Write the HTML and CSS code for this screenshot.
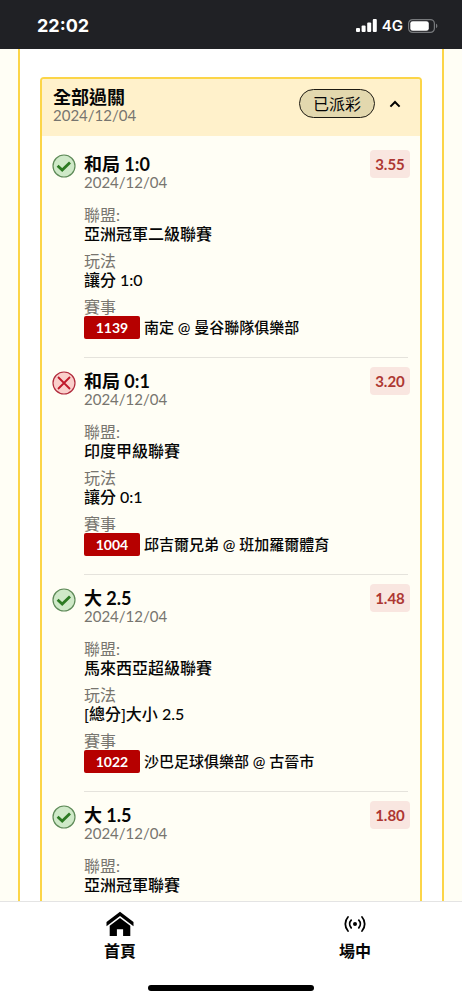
FILE: index.html
```html
<!DOCTYPE html>
<html lang="zh-Hant">
<head>
<meta charset="utf-8">
<meta name="viewport" content="width=device-width, initial-scale=1">
<title>全部過關</title>
<link rel="stylesheet" href="styles.css">
</head>
<body>
<svg class="defs" width="0" height="0" aria-hidden="true">
  <symbol id="win" viewBox="0 0 24 24">
    <circle cx="12" cy="12" r="11" fill="#cfe9c8" stroke="#5e8a58" stroke-width="1.2"/>
    <path d="M5.600 11.800l4.600 4.200 7.800-7.600" fill="none" stroke="#2c7a22" stroke-width="2.800"/>
  </symbol>
  <symbol id="lose" viewBox="0 0 24 24">
    <circle cx="12" cy="12" r="11" fill="#facfcb" stroke="#b02a3c" stroke-width="1.2"/>
    <path d="M6 6l12 12M18 6L6 18" fill="none" stroke="#c0182a" stroke-width="1.8"/>
  </symbol>
</svg>

<header class="status">
  <time class="clock">22:02</time>
  <div class="signals">
    <svg width="21" height="14" viewBox="0 0 21 14" fill="#fff" aria-hidden="true">
      <rect x="0" y="9" width="4" height="4" rx="1"/><rect x="5.6" y="6.5" width="4" height="6.500" rx="1"/><rect x="11.2" y="3.5" width="4" height="9.500" rx="1"/><rect x="16.8" y="0" width="4" height="13" rx="1"/>
    </svg>
    <span>4G</span>
    <svg width="30" height="14" viewBox="0 0 30 14" aria-hidden="true">
      <rect x=".6" y=".6" width="25.8" height="12.8" rx="4" fill="none" stroke="#77797c" stroke-width="1.2"/>
      <rect x="2.3" y="2.2" width="18.5" height="9.6" rx="2.4" fill="#fff"/>
      <path d="M28 4.8c1.8.6 1.8 3.8 0 4.4z" fill="#77797c"/>
    </svg>
  </div>
</header>

<main class="page">
  <div class="panel">
    <section class="card">
      <div class="card-head">
        <div>
          <h1 class="title">全部過關</h1>
          <p class="date">2024/12/04</p>
        </div>
        <div class="card-tools">
          <span class="pill">已派彩</span>
          <button class="toggle" type="button" aria-label="收合">
            <svg width="12" height="8" viewBox="0 0 12 8"><path d="M1.4 6.6L6 2l4.600 4.600" fill="none" stroke="#000" stroke-width="2"/></svg>
          </button>
        </div>
      </div>
      <div class="bets">
        <article class="bet">
          <svg class="mark" role="img" aria-label="贏"><use href="#win"/></svg>
          <div class="info">
            <h2 class="title">和局 1:0</h2>
            <p class="date">2024/12/04</p>
            <dl class="facts">
              <div><dt>聯盟:</dt><dd>亞洲冠軍二級聯賽</dd></div>
              <div><dt>玩法</dt><dd>讓分 1:0</dd></div>
              <div><dt>賽事</dt><dd class="match"><span class="code">1139</span>南定 @ 曼谷聯隊俱樂部</dd></div>
            </dl>
          </div>
          <span class="odds">3.55</span>
        </article>
        <hr class="rule">
        <article class="bet">
          <svg class="mark" role="img" aria-label="輸"><use href="#lose"/></svg>
          <div class="info">
            <h2 class="title">和局 0:1</h2>
            <p class="date">2024/12/04</p>
            <dl class="facts">
              <div><dt>聯盟:</dt><dd>印度甲級聯賽</dd></div>
              <div><dt>玩法</dt><dd>讓分 0:1</dd></div>
              <div><dt>賽事</dt><dd class="match"><span class="code">1004</span>邱吉爾兄弟 @ 班加羅爾體育</dd></div>
            </dl>
          </div>
          <span class="odds">3.20</span>
        </article>
        <hr class="rule">
        <article class="bet">
          <svg class="mark" role="img" aria-label="贏"><use href="#win"/></svg>
          <div class="info">
            <h2 class="title">大 2.5</h2>
            <p class="date">2024/12/04</p>
            <dl class="facts">
              <div><dt>聯盟:</dt><dd>馬來西亞超級聯賽</dd></div>
              <div><dt>玩法</dt><dd>[總分]大小 2.5</dd></div>
              <div><dt>賽事</dt><dd class="match"><span class="code">1022</span>沙巴足球俱樂部 @ 古晉市</dd></div>
            </dl>
          </div>
          <span class="odds">1.48</span>
        </article>
        <hr class="rule">
        <article class="bet">
          <svg class="mark" role="img" aria-label="贏"><use href="#win"/></svg>
          <div class="info">
            <h2 class="title">大 1.5</h2>
            <p class="date">2024/12/04</p>
            <dl class="facts">
              <div><dt>聯盟:</dt><dd>亞洲冠軍聯賽</dd></div>
            </dl>
          </div>
          <span class="odds">1.80</span>
        </article>
      </div>
    </section>
  </div>
</main>

<footer class="dock">
  <nav class="tabs">
    <a class="tab" href="#home">
      <svg width="28" height="26" viewBox="0 0 28 26" fill="#000" aria-hidden="true">
        <path d="M14 .8L.5 11v4.200L14 5l13.500 10.200V11z"/>
        <path d="M14 7L3.700 14.800V25h7.200v-6.800h6.200V25h7.200V14.800z"/>
      </svg>
      首頁
    </a>
    <a class="tab" href="#live">
      <svg width="28" height="26" viewBox="0 0 28 26" fill="none" stroke="#000" stroke-width="1.800" stroke-linecap="round" aria-hidden="true">
        <circle cx="14" cy="13" r="2" fill="#000" stroke="none"/>
        <path d="M10.200 9.200a5.600 5.600 0 0 0 0 7.600M17.800 9.200a5.600 5.600 0 0 1 0 7.600M7 6a10.500 10.500 0 0 0 0 14M21 6a10.500 10.500 0 0 1 0 14"/>
      </svg>
      場中
    </a>
  </nav>
  <div class="home-bar"></div>
</footer>
</body>
</html>
```

FILE: styles.css
```css
* { box-sizing: border-box; }

body, h1, h2, p, dl, dd { margin: 0; }

body {
  display: flex;
  flex-direction: column;
  height: 100vh;
  overflow: hidden;
  background: #fffef5;
  color: #060606;
  font-family: Lato, "Noto Sans CJK TC", sans-serif;
  font-size: 16px;
}

.defs { position: absolute; }

.status {
  display: flex;
  flex: none;
  align-items: center;
  justify-content: space-between;
  height: 49px;
  padding: 2px 24px 0 37px;
  background: #202125;
  color: #fff;
  font-family: Inter, sans-serif;
}

.clock { font-size: 18px; font-weight: 700; }

.signals {
  display: flex;
  align-items: center;
  gap: 5px;
  font-size: 15px;
  font-weight: 600;
}

.page {
  flex: 1;
  min-height: 0;
  overflow: hidden;
  padding: 0 18px;
}

.panel {
  min-height: 100%;
  padding: 28px 20px 0;
  border: solid #fcd548;
  border-width: 0 2px;
  background: #fff;
}

.card {
  min-height: 900px;
  overflow: hidden;
  border: 2px solid #fcd548;
  border-radius: 4px;
  background: #fffef5;
}

.card-head {
  display: flex;
  align-items: flex-start;
  justify-content: space-between;
  padding: 8px 17px 12px 11px;
  background: #fff1cb;
}

.title { font-size: 18px; font-weight: 700; line-height: 20px; }

.date {
  color: #77756f;
  font-size: 15px;
  line-height: 17px;
}

.card-tools { display: flex; align-items: center; gap: 12px; padding-top: 2px; }

.pill {
  padding: 0 13px;
  border: 1px solid #1d1a12;
  border-radius: 15px;
  background: #e3d8ae;
  font-size: 16px;
  line-height: 27px;
}

.toggle {
  display: flex;
  padding: 4px 2px;
  border: 0;
  background: none;
}

.bets { padding: 5px 10px 0; }

.bet {
  display: flex;
  align-items: flex-start;
  gap: 8px;
  padding: 9px 0 18px;
}

.mark { flex: none; width: 24px; height: 24px; margin-top: 4px; }

.info { flex: 1; padding-top: 4px; }

.facts {
  display: flex;
  flex-direction: column;
  gap: 8px;
  padding-top: 14px;
  line-height: 19px;
}

dt { color: #77756f; }

dd { font-weight: 500; }

.match {
  display: flex;
  align-items: center;
  gap: 4px;
  font-size: 15px;
  line-height: 23px;
}

.code {
  width: 56px;
  border-radius: 2px;
  background: #b60000;
  color: #fff;
  font-size: 14px;
  font-weight: 700;
  text-align: center;
}

.odds {
  width: 40px;
  border-radius: 4px;
  background: #f9e6e0;
  color: #ad3732;
  font-size: 15px;
  font-weight: 700;
  line-height: 28px;
  text-align: center;
}

.rule {
  height: 1px;
  margin: 0 2px 0 32px;
  border: 0;
  background: #e5e3dc;
}

.dock {
  display: flex;
  flex: none;
  flex-direction: column;
  align-items: center;
  justify-content: space-between;
  height: 99px;
  padding: 9px 0;
  border-top: 1px solid #e4e4e4;
  background: #fff;
}

.tabs {
  display: flex;
  align-self: stretch;
  justify-content: space-between;
  padding: 0 91px 0 104px;
}

.tab {
  display: flex;
  flex-direction: column;
  align-items: center;
  gap: 3px;
  color: #060606;
  font-weight: 700;
  line-height: 22px;
  text-decoration: none;
}

.home-bar {
  width: 36%;
  height: 6px;
  border-radius: 3px;
  background: #000;
}
```
